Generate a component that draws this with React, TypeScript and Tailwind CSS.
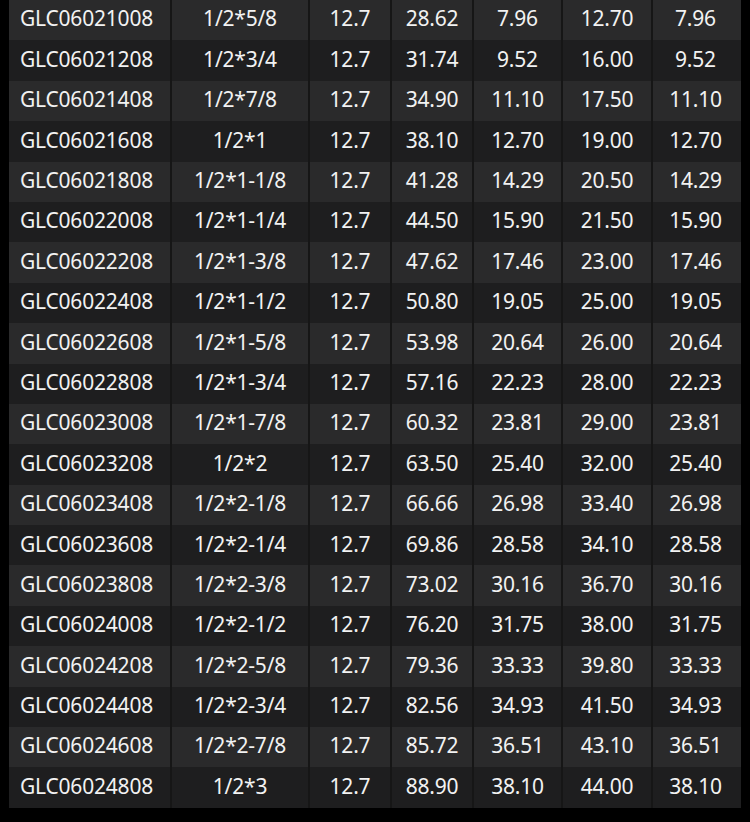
import React from 'react';

const rows: string[][] = [
    ['GLC06021008', '1/2*5/8', '12.7', '28.62', '7.96', '12.70', '7.96'],
    ['GLC06021208', '1/2*3/4', '12.7', '31.74', '9.52', '16.00', '9.52'],
    ['GLC06021408', '1/2*7/8', '12.7', '34.90', '11.10', '17.50', '11.10'],
    ['GLC06021608', '1/2*1', '12.7', '38.10', '12.70', '19.00', '12.70'],
    ['GLC06021808', '1/2*1-1/8', '12.7', '41.28', '14.29', '20.50', '14.29'],
    ['GLC06022008', '1/2*1-1/4', '12.7', '44.50', '15.90', '21.50', '15.90'],
    ['GLC06022208', '1/2*1-3/8', '12.7', '47.62', '17.46', '23.00', '17.46'],
    ['GLC06022408', '1/2*1-1/2', '12.7', '50.80', '19.05', '25.00', '19.05'],
    ['GLC06022608', '1/2*1-5/8', '12.7', '53.98', '20.64', '26.00', '20.64'],
    ['GLC06022808', '1/2*1-3/4', '12.7', '57.16', '22.23', '28.00', '22.23'],
    ['GLC06023008', '1/2*1-7/8', '12.7', '60.32', '23.81', '29.00', '23.81'],
    ['GLC06023208', '1/2*2', '12.7', '63.50', '25.40', '32.00', '25.40'],
    ['GLC06023408', '1/2*2-1/8', '12.7', '66.66', '26.98', '33.40', '26.98'],
    ['GLC06023608', '1/2*2-1/4', '12.7', '69.86', '28.58', '34.10', '28.58'],
    ['GLC06023808', '1/2*2-3/8', '12.7', '73.02', '30.16', '36.70', '30.16'],
    ['GLC06024008', '1/2*2-1/2', '12.7', '76.20', '31.75', '38.00', '31.75'],
    ['GLC06024208', '1/2*2-5/8', '12.7', '79.36', '33.33', '39.80', '33.33'],
    ['GLC06024408', '1/2*2-3/4', '12.7', '82.56', '34.93', '41.50', '34.93'],
    ['GLC06024608', '1/2*2-7/8', '12.7', '85.72', '36.51', '43.10', '36.51'],
    ['GLC06024808', '1/2*3', '12.7', '88.90', '38.10', '44.00', '38.10'],
];

const widths = ['w-[161px] pr-[6px]', 'w-[138px]', 'w-[82px]', 'w-[82px]', 'w-[89px]', 'w-[90px]', 'w-[90px] pr-[3px]'];

function App() {
    return (
        <div className="w-[750px] h-[822px] bg-black pl-[9px] overflow-hidden" style={{ fontFamily: '"Noto Sans", "Open Sans", sans-serif' }}>
            <div className="flex flex-col w-[732px]">
                {rows.map((row, i) => (
                    <div key={i} className={`flex flex-row h-[40.4px] ${i % 2 === 0 ? 'bg-[#2a2a2b]' : 'bg-[#1e1e1f]'}`}>
                        {row.map((cell, j) => (
                            <div
                                key={j}
                                className={`${widths[j]} flex items-center justify-center pb-[2px] text-[21px] text-[#f2f2f2] tracking-[-0.2px] ${j > 0 ? 'border-l-2 border-[#161616]' : ''}`}
                            >
                                {cell}
                            </div>
                        ))}
                    </div>
                ))}
            </div>
        </div>
    );
}

export default App;
